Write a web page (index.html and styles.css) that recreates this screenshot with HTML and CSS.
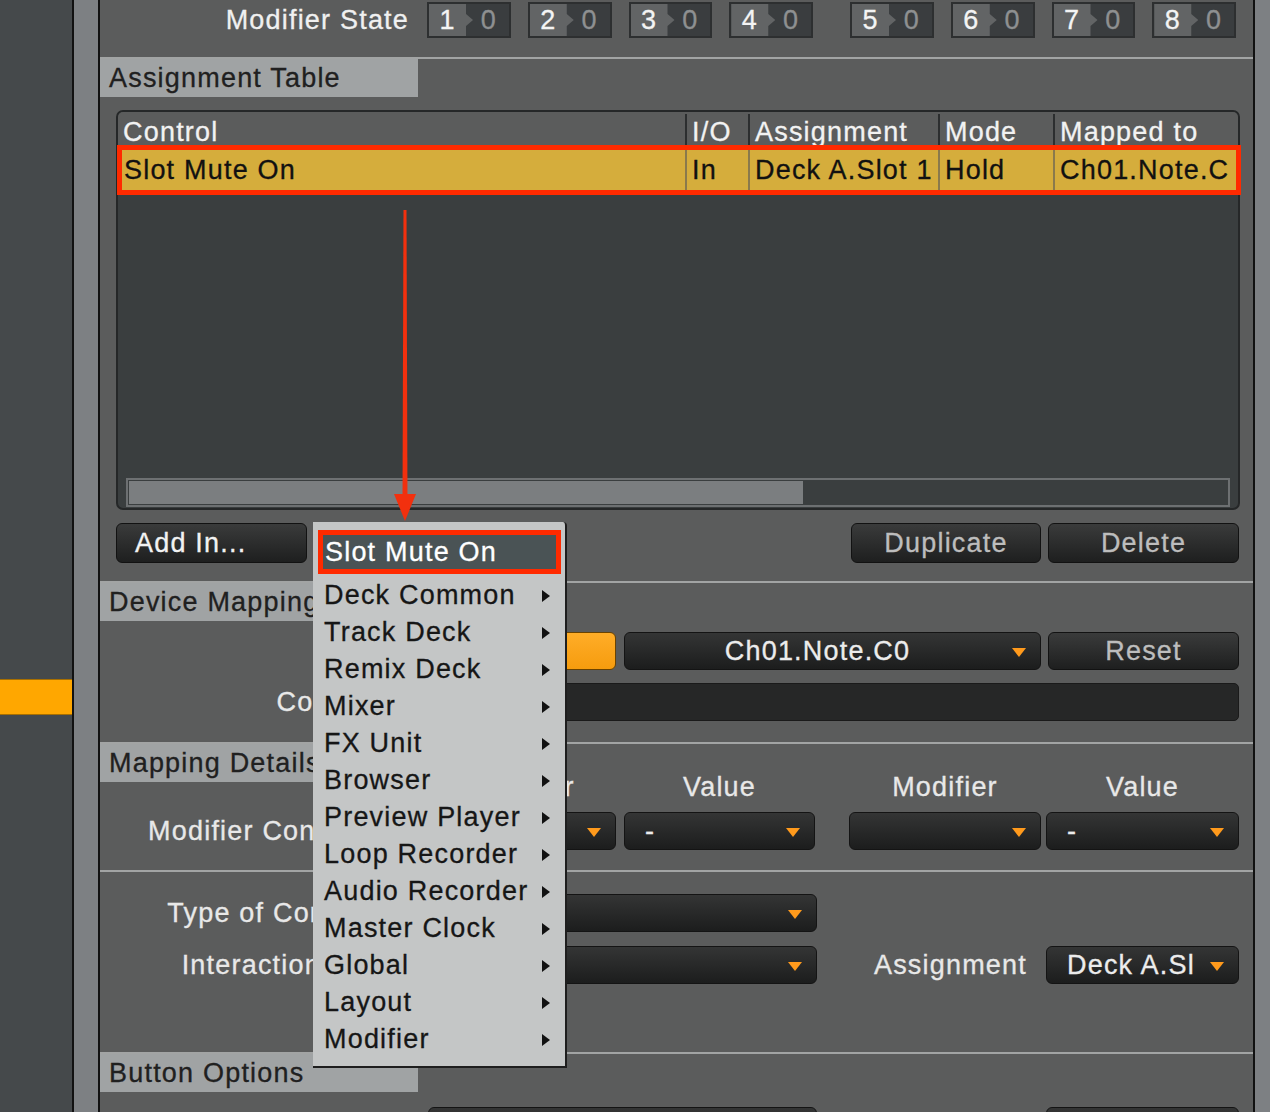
FILE: index.html
```html
<!DOCTYPE html>
<html>
    <head>
        <title>Controller Manager</title>
        <link rel="stylesheet" href="styles.css">
    </head>
    <body>
        <div class="app">
            <div class="devices">
                <div class="device-tab"></div>
            </div>
            <div class="rail"></div>

            <div class="panel">
                <!-- modifier state strip -->
                <div class="modstate">
                    <span class="modstate-label">Modifier State</span>
                    <div class="mod"><span class="mod-num">1</span><span class="mod-val">0</span></div>
                    <div class="mod"><span class="mod-num">2</span><span class="mod-val">0</span></div>
                    <div class="mod"><span class="mod-num">3</span><span class="mod-val">0</span></div>
                    <div class="mod"><span class="mod-num">4</span><span class="mod-val">0</span></div>
                    <div class="mod"><span class="mod-num">5</span><span class="mod-val">0</span></div>
                    <div class="mod"><span class="mod-num">6</span><span class="mod-val">0</span></div>
                    <div class="mod"><span class="mod-num">7</span><span class="mod-val">0</span></div>
                    <div class="mod"><span class="mod-num">8</span><span class="mod-val">0</span></div>
                </div>

                <!-- assignment table -->
                <div class="section section-table">
                    <div class="section-title">Assignment Table</div>
                    <div class="table">
                        <div class="thead">
                            <div class="cell">Control</div>
                            <div class="cell">I/O</div>
                            <div class="cell">Assignment</div>
                            <div class="cell">Mode</div>
                            <div class="cell">Mapped to</div>
                        </div>
                        <div class="trow selected">
                            <div class="cell">Slot Mute On</div>
                            <div class="cell">In</div>
                            <div class="cell">Deck A.Slot 1</div>
                            <div class="cell">Hold</div>
                            <div class="cell">Ch01.Note.C</div>
                        </div>
                        <div class="tbody">
                            <div class="hscroll"><div class="hscroll-thumb"></div></div>
                        </div>
                    </div>
                    <div class="table-actions">
                        <div class="btn btn-add">Add In...</div>
                        <span class="spacer"></span>
                        <div class="btn btn-dup">Duplicate</div>
                        <div class="btn btn-del">Delete</div>
                    </div>
                </div>

                <!-- device mapping -->
                <div class="section section-device">
                    <div class="section-title">Device Mapping</div>
                    <div class="formrow row-learn">
                        <span class="label"></span>
                        <div class="btn-learn">Learn</div>
                        <div class="dd dd-note">Ch01.Note.C0</div>
                        <div class="btn btn-reset">Reset</div>
                    </div>
                    <div class="formrow row-comment">
                        <span class="label">Comment</span>
                        <div class="field"></div>
                    </div>
                </div>

                <!-- mapping details -->
                <div class="section section-details">
                    <div class="section-title">Mapping Details</div>
                    <div class="colheads">
                        <span class="colhead w-a">Modifier</span>
                        <span class="colhead w-b">Value</span>
                        <span class="colhead w-c">Modifier</span>
                        <span class="colhead w-d">Value</span>
                    </div>
                    <div class="formrow row-cond">
                        <span class="label">Modifier Conditions</span>
                        <div class="dd w-a"></div>
                        <div class="dd w-b">-</div>
                        <div class="dd w-c"></div>
                        <div class="dd w-d">-</div>
                    </div>
                </div>

                <div class="section section-type">
                    <div class="formrow">
                        <span class="label">Type of Controller</span>
                        <div class="dd w-wide"></div>
                    </div>
                    <div class="formrow row-interaction">
                        <span class="label">Interaction Mode</span>
                        <div class="dd w-wide"></div>
                        <span class="label label-assign">Assignment</span>
                        <div class="dd w-d">Deck A.Sl</div>
                    </div>
                </div>

                <div class="section section-options">
                    <div class="section-title">Button Options</div>
                    <div class="formrow row-options">
                        <span class="label"></span>
                        <div class="dd w-wide"></div>
                        <span class="spacer"></span>
                        <div class="dd w-d"></div>
                    </div>
                </div>
            </div>

            <div class="rail rail-right"></div>

            <!-- annotation arrow -->
            <svg class="annot-arrow" width="24" height="312" viewBox="0 0 24 312">
                <polygon points="10.5,0 13.5,0 14.5,290 9.5,290" fill="#f2300e"/>
                <polygon points="1,284 23,284 12,311" fill="#f2300e"/>
            </svg>

            <!-- add-in context menu -->
            <div class="menu">
                <div class="menu-item active">Slot Mute On</div>
                <div class="menu-item sub">Deck Common</div>
                <div class="menu-item sub">Track Deck</div>
                <div class="menu-item sub">Remix Deck</div>
                <div class="menu-item sub">Mixer</div>
                <div class="menu-item sub">FX Unit</div>
                <div class="menu-item sub">Browser</div>
                <div class="menu-item sub">Preview Player</div>
                <div class="menu-item sub">Loop Recorder</div>
                <div class="menu-item sub">Audio Recorder</div>
                <div class="menu-item sub">Master Clock</div>
                <div class="menu-item sub">Global</div>
                <div class="menu-item sub">Layout</div>
                <div class="menu-item sub">Modifier</div>
            </div>
        </div>
    </body>
</html>
```

FILE: styles.css
```css
* {
    box-sizing: border-box;
}

body {
    margin: 0;
    overflow: hidden;
    background-color: #5b5c5c;
    font-family: "Liberation Sans", Arial, sans-serif;
    font-size: 27px;
    letter-spacing: 1.2px;
    color: #e8e8e8;
    -webkit-text-stroke: 0.3px currentColor;
}

.app {
    position: relative;
    display: flex;
    width: 1270px;
    height: 1112px;
    overflow: hidden;
}

/* left device list */
.devices {
    width: 74px;
    flex: none;
    padding-top: 679px;
    background-color: #45494b;
    border-right: 2px solid #111;
}

.device-tab {
    height: 36px;
    background-color: #ffa700;
    border-top: 1px solid #a86f00;
    border-bottom: 1px solid #a86f00;
}

.rail {
    width: 26px;
    flex: none;
    background-color: #7d8083;
    border-right: 2px solid #111;
}

.rail-right {
    width: 15px;
    border-right: none;
}

/* main panel */
.panel {
    width: 1155px;
    flex: none;
    display: flex;
    flex-direction: column;
    background-color: #5b5c5c;
    border-right: 2px solid #111;
}

.panel > * {
    flex: none;
}

.modstate {
    display: flex;
    align-items: flex-start;
    height: 57px;
    padding-top: 2px;
}

.modstate-label {
    width: 310px;
    margin-right: 18px;
    text-align: right;
    line-height: 36px;
    color: #f0f0f0;
}

.mod {
    display: flex;
    width: 84px;
    height: 36px;
    margin-right: 17px;
    background-color: #3a3d3f;
    border: 2px solid #2d2f30;
    line-height: 32px;
}

.mod:nth-child(6) {
    margin-left: 20px;
}

.mod-num {
    width: 44px;
    padding-right: 7px;
    text-align: center;
    color: #f4f4f4;
    background-color: #626465;
    clip-path: polygon(0 0, 37px 0, 37px 10px, 44px 16px, 37px 22px, 37px 100%, 0 100%);
}

.mod-val {
    flex: 1;
    padding-right: 4px;
    text-align: center;
    color: #8e9091;
}

/* sections */
.section {
    border-top: 2px solid #a2a4a4;
}

.section-title {
    width: 318px;
    height: 38px;
    padding-left: 9px;
    line-height: 38px;
    color: #202020;
    background-color: #a0a3a4;
}

.section-table {
    padding-bottom: 18px;
}

.section-device {
    padding-bottom: 21px;
}

.section-details {
    padding-bottom: 20px;
}

.section-type {
    padding-top: 22px;
    padding-bottom: 68px;
}

/* assignment table */
.table {
    display: flex;
    flex-direction: column;
    width: 1124px;
    height: 400px;
    margin: 13px 0 0 16px;
    background-color: #3a3e3f;
    border: 2px solid #252728;
    border-radius: 7px;
}

.thead,
.trow {
    display: grid;
    grid-template-columns: 567px 63px 190px 115px 1fr;
}

.thead {
    height: 38px;
    padding-top: 2px;
    line-height: 36px;
    color: #f2f2f2;
    background-color: #5b5c5c;
    border-radius: 5px 5px 0 0;
}

.cell {
    padding-left: 5px;
    white-space: nowrap;
    overflow: hidden;
    border-left: 2px solid #2c2e2f;
}

.cell:first-child {
    border-left: none;
}

.trow {
    position: relative;
    z-index: 1;
    grid-template-columns: 563px 63px 190px 115px 1fr;
    height: 40px;
    margin: 0 2px 0 4px;
    line-height: 40px;
    color: #111;
    background-color: #d5ad3c;
}

.trow .cell {
    border-left-color: #8a7a4c;
}

.trow .cell:first-child {
    padding-left: 2px;
}

.selected {
    box-shadow: 0 0 0 5px #ff2a00;
}

.tbody {
    flex: 1;
    display: flex;
    flex-direction: column;
    justify-content: flex-end;
    padding: 0 8px 1px 8px;
}

.hscroll {
    height: 29px;
    padding: 1px;
    border: 2px solid #6d7072;
    background-color: #3a3e3f;
}

.hscroll-thumb {
    width: 674px;
    height: 100%;
    background-color: #7b7e80;
}

.table-actions {
    display: flex;
    gap: 7px;
    height: 40px;
    margin-top: 13px;
    padding: 0 14px 0 16px;
}

.spacer {
    flex: 1;
}

/* buttons and dropdowns */
.btn {
    width: 191px;
    height: 40px;
    line-height: 38px;
    text-align: center;
    color: #bdbdbd;
    background: linear-gradient(#3a3b3b, #1e1f1f);
    border: 1px solid #121212;
    border-radius: 6px;
}

.btn-add {
    padding-left: 18px;
    text-align: left;
    color: #f2f2f2;
}

.btn-dup {
    width: 190px;
}

.btn-learn {
    width: 188px;
    height: 38px;
    margin-right: 8px;
    line-height: 36px;
    text-align: center;
    color: #222;
    background: linear-gradient(#ffad28, #f69c0e);
    border: 1px solid #6b4300;
    border-radius: 6px;
}

.dd {
    position: relative;
    height: 38px;
    padding-left: 20px;
    line-height: 36px;
    white-space: nowrap;
    color: #ececec;
    background: linear-gradient(#343535, #1c1d1d);
    border: 1px solid #141414;
    border-radius: 6px;
}

.dd::after {
    content: "";
    position: absolute;
    right: 14px;
    top: 15px;
    border-left: 7px solid transparent;
    border-right: 7px solid transparent;
    border-top: 9px solid #ff9a1c;
}

.dd-note {
    width: 417px;
    margin-right: 7px;
    padding-right: 50px;
    text-align: center;
}

.btn-reset {
    height: 38px;
    line-height: 36px;
}

.w-a { width: 188px; margin-right: 8px; }
.w-b { width: 191px; margin-right: 34px; }
.w-c { width: 192px; margin-right: 5px; }
.w-d { width: 193px; }
.w-wide { width: 389px; }

.field {
    width: 811px;
    height: 38px;
    background-color: #262727;
    border: 1px solid #1a1a1a;
    border-radius: 5px;
}

/* form rows */
.formrow {
    display: flex;
    align-items: center;
    height: 38px;
    padding-right: 14px;
}

.label {
    width: 310px;
    margin-right: 18px;
    padding-right: 8px;
    text-align: right;
    white-space: nowrap;
    color: #e8e8e8;
}

.row-learn {
    margin-top: 11px;
}

.row-comment {
    margin-top: 13px;
}

.colheads {
    display: flex;
    height: 26px;
    margin-top: -8px;
    padding-left: 328px;
    line-height: 26px;
}

.colhead {
    text-align: center;
    color: #e8e8e8;
}

.row-cond {
    margin-top: 12px;
}

.row-interaction {
    margin-top: 14px;
}

.label-assign {
    flex: 1;
    width: auto;
    margin-right: 0;
    padding-right: 19px;
}

.row-options {
    margin-top: 15px;
}

/* overlays */
.annot-arrow {
    position: absolute;
    left: 393px;
    top: 210px;
    z-index: 3;
}

.menu {
    position: absolute;
    left: 313px;
    top: 522px;
    z-index: 4;
    width: 254px;
    padding: 8px 0 8px 0;
    color: #161616;
    background-color: #c4c6c6;
    border-right: 2px solid #1e1e1e;
    border-bottom: 2px solid #1e1e1e;
    border-radius: 0 4px 0 0;
}

.menu-item {
    position: relative;
    height: 37px;
    padding-left: 11px;
    line-height: 37px;
    white-space: nowrap;
}

.menu-item.active {
    height: 44px;
    margin: 0 4px 3px 5px;
    padding-left: 2px;
    line-height: 34px;
    color: #fff;
    background-color: #4a5355;
    border: 5px solid #ff2a00;
}

.sub::after {
    content: "";
    position: absolute;
    right: 15px;
    top: 13px;
    border-top: 6px solid transparent;
    border-bottom: 6px solid transparent;
    border-left: 8px solid #111;
}
```
